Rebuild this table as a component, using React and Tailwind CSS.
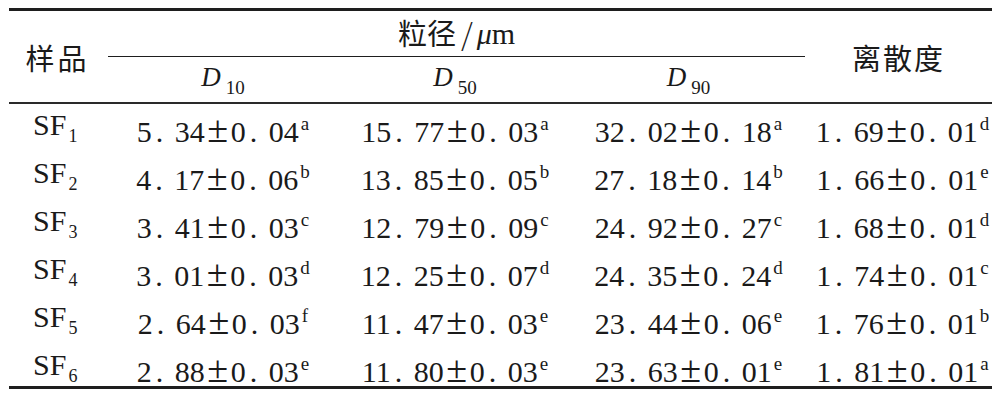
const rows = [
  { id: "1", d10: ["5.34±0.04", "a"], d50: ["15.77±0.03", "a"], d90: ["32.02±0.18", "a"], disp: ["1.69±0.01", "d"] },
  { id: "2", d10: ["4.17±0.06", "b"], d50: ["13.85±0.05", "b"], d90: ["27.18±0.14", "b"], disp: ["1.66±0.01", "e"] },
  { id: "3", d10: ["3.41±0.03", "c"], d50: ["12.79±0.09", "c"], d90: ["24.92±0.27", "c"], disp: ["1.68±0.01", "d"] },
  { id: "4", d10: ["3.01±0.03", "d"], d50: ["12.25±0.07", "d"], d90: ["24.35±0.24", "d"], disp: ["1.74±0.01", "c"] },
  { id: "5", d10: ["2.64±0.03", "f"], d50: ["11.47±0.03", "e"], d90: ["23.44±0.06", "e"], disp: ["1.76±0.01", "b"] },
  { id: "6", d10: ["2.88±0.03", "e"], d50: ["11.80±0.03", "e"], d90: ["23.63±0.01", "e"], disp: ["1.81±0.01", "a"] },
];

const serif = "font-['Liberation_Serif','Noto_Sans_CJK_SC',serif]";
const cjk = "font-['Noto_Sans_CJK_SC',sans-serif]";
const cols = "grid grid-cols-[99px_230px_234px_233px_187px]";

function Num({ value }) {
  const [v, sup] = value;
  const parts = v.split(/([.±])/);
  return (
    <span className={`inline-flex items-baseline text-[30px] leading-none ${serif}`}>
      {parts.map((p, i) => {
        if (p === ".") return <span key={i} className="inline-block w-[23px] pl-[4px]">.</span>;
        if (p === "±") return <span key={i} className="inline-block w-[26px] text-center text-[38px] leading-none">±</span>;
        return <span key={i}>{p}</span>;
      })}
      <span className="relative top-[-12px] ml-[2px] text-[19px]">{sup}</span>
    </span>
  );
}

function DLabel({ sub }) {
  return (
    <span className={`inline-flex items-baseline leading-none ${serif}`}>
      <span className="italic text-[27px]">D</span>
      <span className="relative top-[8px] ml-[5px] text-[19px]">{sub}</span>
    </span>
  );
}

export default function App() {
  return (
    <div className="w-[992px] h-[400px] bg-white pt-[8px] pl-[9px] text-[#1a1a1a] overflow-hidden">
      <div className="w-[983px] border-t-[3px] border-b-[3px] border-[#1e1e1e]">
        {/* Header */}
        <div className={`${cols} grid-rows-[46px_45px] border-b-2 border-[#2a2a2a]`}>
          <div className={`row-span-2 flex items-center justify-center pr-[2px] pt-[2px] text-[29px] tracking-[3px] ${cjk}`}>
            样品
          </div>
          <div className="col-span-3 flex items-center justify-center border-b border-[#1e1e1e] pb-[1px]">
            <span className={`text-[29px] ${cjk}`}>粒径</span>
            <span className={`text-[30px] ml-[5px] mr-[4px] ${cjk} font-light`}>/</span>
            <span className={`text-[30px] ${serif}`}><span className="italic">μ</span>m</span>
          </div>
          <div className={`row-span-2 flex items-center justify-center pt-[2px] text-[29px] tracking-[2px] ${cjk}`}>
            离散度
          </div>
          <div className="flex items-center justify-center pb-[4px]"><DLabel sub="10" /></div>
          <div className="flex items-center justify-center pb-[4px]"><DLabel sub="50" /></div>
          <div className="flex items-center justify-center pb-[4px]"><DLabel sub="90" /></div>
        </div>

        {/* Body */}
        <div>
          {rows.map((r) => (
            <div key={r.id} className={`${cols} h-[48px] last:h-[42px] items-start pt-[6px]`}>
              <div className={`flex items-baseline pl-[24px] text-[30px] leading-none ${serif}`}>
                SF<span className="relative top-[7px] ml-[2px] text-[18px]">{r.id}</span>
              </div>
              <div className="flex justify-center"><Num value={r.d10} /></div>
              <div className="flex justify-center"><Num value={r.d50} /></div>
              <div className="flex justify-center"><Num value={r.d90} /></div>
              <div className="flex justify-center pl-[8px]"><Num value={r.disp} /></div>
            </div>
          ))}
        </div>
      </div>
    </div>
  );
}
